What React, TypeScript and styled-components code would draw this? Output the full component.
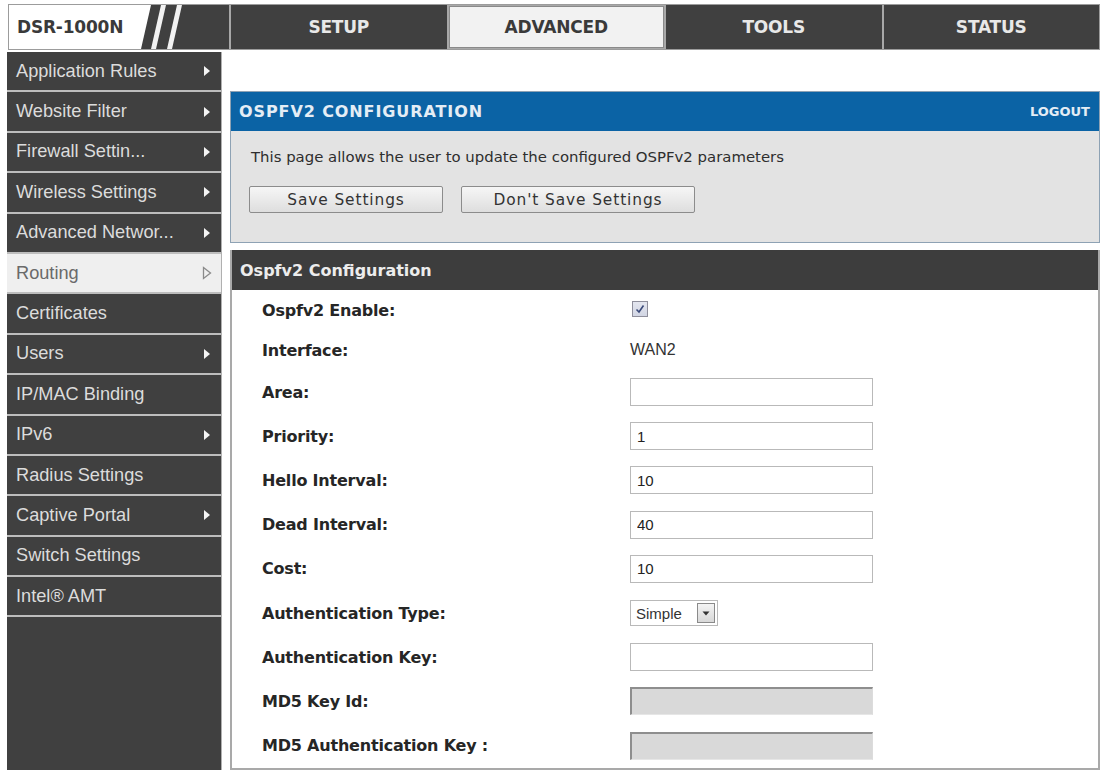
import React from "react";
import styled, { createGlobalStyle } from "styled-components";

const GlobalStyle = createGlobalStyle`
  body {
    margin: 0;
    background: #ffffff;
    font-family: "Liberation Sans", Arial, sans-serif;
  }
  * { box-sizing: border-box; }
`;

const Page = styled.div`
  width: 1104px;
  height: 770px;
  padding: 4px 4px 0 8px;
  display: flex;
  flex-direction: column;
  overflow: hidden;
`;

const TopBar = styled.div`
  display: flex;
  flex-shrink: 0;
  height: 46px;
  background: #404040;
  border: 1px solid #9c9c9c;
`;

const Brand = styled.div`
  position: relative;
  width: 222px;
  flex-shrink: 0;
  display: flex;
  align-items: center;
  padding-left: 8px;
  border-right: 2px solid #a8a8a8;
`;

const BrandArt = styled.svg`
  position: absolute;
  left: 0;
  top: 0;
`;

const BrandName = styled.span`
  position: relative;
  font-family: "DejaVu Sans", Verdana, sans-serif;
  font-weight: bold;
  font-size: 17px;
  color: #3a3a3a;
  letter-spacing: -0.2px;
`;

const Tabs = styled.div`
  flex: 1;
  display: grid;
  grid-template-columns: repeat(4, 1fr);
  gap: 2px;
  background: #a8a8a8;
`;

const Tab = styled.div<{ $active?: boolean }>`
  display: flex;
  align-items: center;
  justify-content: center;
  background: ${(p) => (p.$active ? "#f2f2f2" : "#404040")};
  color: ${(p) => (p.$active ? "#3a3a3a" : "#e8e8e8")};
  border: ${(p) => (p.$active ? "1px solid #8a8a8a" : "none")};
  margin: ${(p) => (p.$active ? "1px 0" : "0")};
  font-family: "DejaVu Sans", Verdana, sans-serif;
  font-weight: bold;
  font-size: 17px;
  letter-spacing: -0.2px;
`;

const Body = styled.div`
  flex: 1;
  min-height: 0;
  display: flex;
  margin-top: 2px;
`;

const Sidebar = styled.nav`
  width: 215px;
  flex-shrink: 0;
  margin-left: -1px;
  background: #404040;
  border-right: 1px solid #b0b0b0;
  display: flex;
  flex-direction: column;
`;

const NavItem = styled.div<{ $active?: boolean }>`
  height: 40.4px;
  flex-shrink: 0;
  display: flex;
  align-items: center;
  justify-content: space-between;
  padding: 0 9px 0 9px;
  border-bottom: 2px solid #bdbdbd;
  background: ${(p) => (p.$active ? "#efefef" : "#404040")};
  color: ${(p) => (p.$active ? "#6a6a6a" : "#dcdcdc")};
  font-size: 18.2px;
  white-space: nowrap;
`;

const Main = styled.main`
  flex: 1;
  margin-left: 8px;
  padding-top: 39px;
  display: flex;
  flex-direction: column;
  gap: 7px;
`;

const InfoPanel = styled.section`
  flex-shrink: 0;
  border: 1px solid #8ea2b4;
  background: #e3e3e3;
  height: 152px;
  display: flex;
  flex-direction: column;
`;

const BlueHeader = styled.div`
  height: 39px;
  background: #0b63a5;
  display: flex;
  align-items: center;
  justify-content: space-between;
  padding: 0 9px 0 8px;
  font-family: "DejaVu Sans", Verdana, sans-serif;
  font-weight: bold;
  color: #e4edf5;
`;

const BlueTitle = styled.span`
  font-size: 16px;
  letter-spacing: 0.9px;
`;

const Logout = styled.span`
  font-size: 13px;
`;

const InfoBody = styled.div`
  padding: 17px 0 0 20px;
  display: flex;
  flex-direction: column;
  gap: 20px;
`;

const InfoText = styled.p`
  margin: 0;
  font-family: "DejaVu Sans", Verdana, sans-serif;
  font-size: 14.9px;
  color: #2e2e2e;
`;

const ButtonRow = styled.div`
  display: flex;
  gap: 18px;
  margin-left: -2px;
`;

const Button = styled.button<{ $width: number }>`
  width: ${(p) => p.$width}px;
  height: 27px;
  border: 1px solid #8c8c8c;
  border-radius: 2px;
  background: linear-gradient(#f6f6f6, #dedede);
  font-family: "DejaVu Sans", Verdana, sans-serif;
  font-size: 15.4px;
  letter-spacing: 0.9px;
  color: #333;
  padding: 0;
`;

const ConfigPanel = styled.section`
  flex: 1;
  border: 2px solid #a9a9a9;
  border-top: none;
  display: flex;
  flex-direction: column;
`;

const DarkHeader = styled.div`
  height: 40px;
  flex-shrink: 0;
  background: #3d3d3d;
  display: flex;
  align-items: center;
  padding-left: 8px;
  font-family: "DejaVu Sans", Verdana, sans-serif;
  font-weight: bold;
  font-size: 16px;
  color: #ececec;
`;

const Form = styled.div`
  display: grid;
  grid-template-columns: 368px 1fr;
  padding-left: 30px;
`;

const Label = styled.div<{ $short?: boolean }>`
  display: flex;
  align-items: center;
  font-family: "DejaVu Sans", Verdana, sans-serif;
  font-weight: bold;
  font-size: 16px;
  color: #262626;
  height: ${(p) => (p.$short ? "40px" : "44.2px")};
  letter-spacing: -0.2px;
`;

const Value = styled.div<{ $short?: boolean }>`
  display: flex;
  align-items: center;
  height: ${(p) => (p.$short ? "40px" : "44.2px")};
  font-size: 16px;
  color: #333;
`;

const TextBox = styled.input`
  width: 243px;
  height: 28px;
  border: 1px solid #b9b9b9;
  background: #fff;
  font-family: "Liberation Sans", Arial, sans-serif;
  font-size: 15px;
  color: #222;
  padding: 0 6px;
  outline: none;
`;

const DisabledBox = styled.div`
  width: 243px;
  height: 28px;
  background: #d9d9d9;
  border-top: 2px solid #8e8e8e;
  border-left: 2px solid #8e8e8e;
  border-right: 1px solid #dcdcdc;
  border-bottom: 1px solid #e6e6e6;
`;

const CheckBox = styled.span`
  width: 16px;
  height: 16px;
  margin: 0 0 3px 2px;
  border: 1px solid #8f8f9c;
  background: linear-gradient(#e4e6ef, #d2d6e4);
  display: flex;
  align-items: center;
  justify-content: center;
`;

const Select = styled.div`
  height: 26px;
  width: 88px;
  border: 1px solid #b9b9b9;
  display: flex;
  align-items: center;
  justify-content: space-between;
  padding: 0 2px 0 5px;
  font-size: 15px;
  color: #333;
`;

const SelectArrow = styled.span`
  width: 18px;
  height: 20px;
  border: 1px solid #8a8a8a;
  background: linear-gradient(#f4f4f4, #d8d8d8);
  display: flex;
  align-items: center;
  justify-content: center;
`;

type NavEntry = { label: string; arrow: boolean; active?: boolean };

const navItems: NavEntry[] = [
  { label: "Application Rules", arrow: true },
  { label: "Website Filter", arrow: true },
  { label: "Firewall Settin...", arrow: true },
  { label: "Wireless Settings", arrow: true },
  { label: "Advanced Networ...", arrow: true },
  { label: "Routing", arrow: true, active: true },
  { label: "Certificates", arrow: false },
  { label: "Users", arrow: true },
  { label: "IP/MAC Binding", arrow: false },
  { label: "IPv6", arrow: true },
  { label: "Radius Settings", arrow: false },
  { label: "Captive Portal", arrow: true },
  { label: "Switch Settings", arrow: false },
  { label: "Intel® AMT", arrow: false },
];

function Arrow({ hollow }: { hollow?: boolean }) {
  return (
    <svg width="10" height="14" viewBox="0 0 10 14">
      {hollow ? (
        <path d="M1.5 1.5 L8.5 7 L1.5 12.5 Z" fill="none" stroke="#8a8a8a" strokeWidth="1.3" />
      ) : (
        <path d="M2 2 L8 7 L2 12 Z" fill="#f4f4f4" />
      )}
    </svg>
  );
}

type Field =
  | { label: string; kind: "check" }
  | { label: string; kind: "text"; value: string }
  | { label: string; kind: "input"; value: string }
  | { label: string; kind: "select"; value: string }
  | { label: string; kind: "disabled" };

const fields: Field[] = [
  { label: "Ospfv2 Enable:", kind: "check" },
  { label: "Interface:", kind: "text", value: "WAN2" },
  { label: "Area:", kind: "input", value: "" },
  { label: "Priority:", kind: "input", value: "1" },
  { label: "Hello Interval:", kind: "input", value: "10" },
  { label: "Dead Interval:", kind: "input", value: "40" },
  { label: "Cost:", kind: "input", value: "10" },
  { label: "Authentication Type:", kind: "select", value: "Simple" },
  { label: "Authentication Key:", kind: "input", value: "" },
  { label: "MD5 Key Id:", kind: "disabled" },
  { label: "MD5 Authentication Key :", kind: "disabled" },
];

function renderValue(f: Field) {
  switch (f.kind) {
    case "check":
      return (
        <CheckBox>
          <svg width="10" height="10" viewBox="0 0 10 10">
            <path d="M1.5 5.5 L4 8 L8.5 1.5" fill="none" stroke="#3b4a7a" strokeWidth="1.6" />
          </svg>
        </CheckBox>
      );
    case "text":
      return f.value;
    case "input":
      return <TextBox defaultValue={f.value} readOnly />;
    case "select":
      return (
        <Select>
          {f.value}
          <SelectArrow>
            <svg width="8" height="5" viewBox="0 0 8 5">
              <path d="M0.5 0.5 L7.5 0.5 L4 4.5 Z" fill="#333" />
            </svg>
          </SelectArrow>
        </Select>
      );
    default:
      return <DisabledBox />;
  }
}

export default function App() {
  return (
    <>
      <GlobalStyle />
      <Page>
        <TopBar>
          <Brand>
            <BrandArt width="220" height="44" viewBox="0 0 220 44">
              <polygon points="0,0 142,0 132,44 0,44" fill="#ffffff" />
              <polygon points="152,0 157,0 147,44 142,44" fill="#f2f2f2" />
              <polygon points="168,0 173,0 163,44 158,44" fill="#f2f2f2" />
            </BrandArt>
            <BrandName>DSR-1000N</BrandName>
          </Brand>
          <Tabs>
            <Tab>SETUP</Tab>
            <Tab $active>ADVANCED</Tab>
            <Tab>TOOLS</Tab>
            <Tab>STATUS</Tab>
          </Tabs>
        </TopBar>
        <Body>
          <Sidebar>
            {navItems.map((item) => (
              <NavItem key={item.label} $active={item.active}>
                {item.label}
                {item.arrow && <Arrow hollow={item.active} />}
              </NavItem>
            ))}
          </Sidebar>
          <Main>
            <InfoPanel>
              <BlueHeader>
                <BlueTitle>OSPFV2 CONFIGURATION</BlueTitle>
                <Logout>LOGOUT</Logout>
              </BlueHeader>
              <InfoBody>
                <InfoText>This page allows the user to update the configured OSPFv2 parameters</InfoText>
                <ButtonRow>
                  <Button $width={194}>Save Settings</Button>
                  <Button $width={234}>Don't Save Settings</Button>
                </ButtonRow>
              </InfoBody>
            </InfoPanel>
            <ConfigPanel>
              <DarkHeader>Ospfv2 Configuration</DarkHeader>
              <Form>
                {fields.map((f, i) => (
                  <React.Fragment key={f.label}>
                    <Label $short={i < 2}>{f.label}</Label>
                    <Value $short={i < 2}>{renderValue(f)}</Value>
                  </React.Fragment>
                ))}
              </Form>
            </ConfigPanel>
          </Main>
        </Body>
      </Page>
    </>
  );
}
